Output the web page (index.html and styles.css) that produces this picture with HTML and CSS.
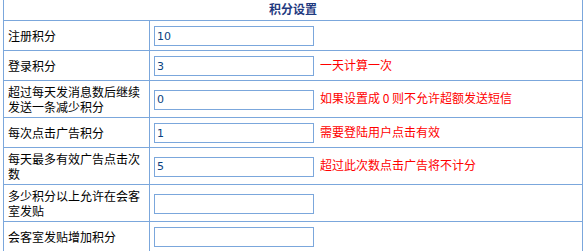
FILE: index.html
```html
<!DOCTYPE html>
<html lang="zh-CN">

<head>
    <meta charset="UTF-8">
    <title>积分设置</title>
    <link rel="stylesheet" href="styles.css">
</head>

<body>

    <form id="points-form">
        <table class="setting-table">
            <tr>
                <th colspan="2" class="table-title">积分设置</th>
            </tr>
            <tr>
                <td class="label-cell">注册积分</td>
                <td class="field-cell"><input type="text" name="reg_points" value="10"></td>
            </tr>
            <tr>
                <td class="label-cell">登录积分</td>
                <td class="field-cell"><input type="text" name="login_points" value="3"><span class="note">一天计算一次</span></td>
            </tr>
            <tr class="tall">
                <td class="label-cell">超过每天发消息数后继续发送一条减少积分</td>
                <td class="field-cell"><input type="text" name="sms_points" value="0"><span class="note">如果设置成 0 则不允许超额发送短信</span></td>
            </tr>
            <tr>
                <td class="label-cell">每次点击广告积分</td>
                <td class="field-cell"><input type="text" name="ad_points" value="1"><span class="note">需要登陆用户点击有效</span></td>
            </tr>
            <tr class="tall">
                <td class="label-cell">每天最多有效广告点击次数</td>
                <td class="field-cell"><input type="text" name="ad_max" value="5"><span class="note">超过此次数点击广告将不计分</span></td>
            </tr>
            <tr class="tall">
                <td class="label-cell">多少积分以上允许在会客室发贴</td>
                <td class="field-cell"><input type="text" name="post_min" value=""></td>
            </tr>
            <tr>
                <td class="label-cell">会客室发贴增加积分</td>
                <td class="field-cell"><input type="text" name="post_points" value=""></td>
            </tr>
            <tr>
                <td colspan="2" class="table-foot"></td>
            </tr>
        </table>
    </form>

</body>

</html>
```

FILE: styles.css
```css
body {
    margin: 0 0 0 3px;
    background-color: #fff;
    font-family: "Noto Sans CJK SC", "DejaVu Sans", sans-serif;
    font-size: 12px;
    color: #000;
}

.setting-table {
    width: 580px;
    border-collapse: collapse;
}

.setting-table td,
.setting-table th {
    border: 1px solid #7ba7dc;
    line-height: 15px;
}

.table-title {
    border-top: none !important;
    height: 16px;
    padding: 0 0 4px;
    color: #1f3a7f;
    font-size: 12px;
    font-weight: bold;
    text-align: center;
}

.label-cell {
    width: 137px;
    padding: 3px 4px;
    vertical-align: middle;
}

.field-cell {
    padding: 3px 4px;
    vertical-align: middle;
}

.field-cell input[type="text"] {
    box-sizing: border-box;
    width: 160px;
    height: 20px;
    margin: 2px 0 1px;
    padding: 0 2px;
    border: 1px solid #7ba7dc;
    font-family: "DejaVu Sans", sans-serif;
    font-size: 11px;
    color: #0b3f7f;
}

.note {
    margin-left: 6px;
    color: #ff0000;
}

.tall td {
    height: 30px;
}

.table-foot {
    height: 30px;
}
```
